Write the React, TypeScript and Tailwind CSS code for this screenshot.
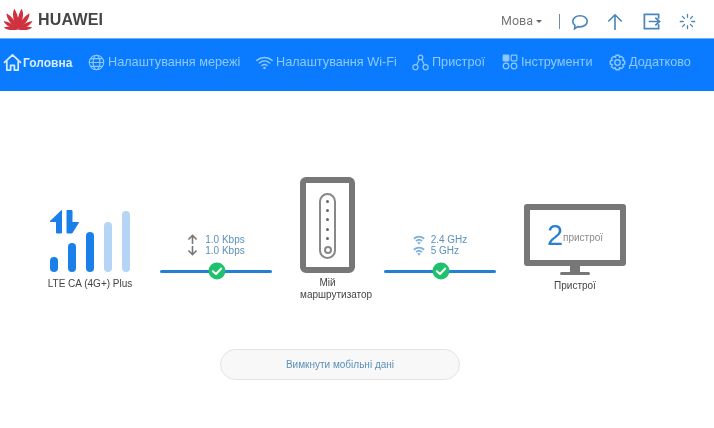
import { ReactNode } from "react"

const navItems: { label: string; icon: ReactNode; active?: boolean; cls: string }[] = [
  {
    label: "Головна",
    active: true,
    cls: "w-[85px] gap-[1px]",
    icon: (
      <svg viewBox="0 0 20 20" className="w-[19px] h-[19px]" fill="none" stroke="currentColor" strokeWidth="1.800" strokeLinejoin="round">
        <path d="M1 10.500 10 2l9 8.500M4 8.500V18h4v-5h4v5h4V8.500" />
      </svg>
    ),
  },
  {
    label: "Налаштування мережі",
    cls: "w-[168px] gap-[3px]",
    icon: (
      <svg viewBox="0 0 20 20" className="w-[17px] h-[17px]" fill="none" stroke="currentColor" strokeWidth="1.300">
        <circle cx="10" cy="10" r="8.500" />
        <ellipse cx="10" cy="10" rx="4" ry="8.500" />
        <path d="M1.500 10h17M2.800 5.500h14.400M2.800 14.500h14.400" />
      </svg>
    ),
  },
  {
    label: "Налаштування Wi-Fi",
    cls: "w-[156px] gap-[3px]",
    icon: (
      <svg viewBox="0 0 20 20" className="w-[17px] h-[17px]" fill="none" stroke="currentColor" strokeWidth="1.700" strokeLinecap="round">
        <path d="M1 7.500c5-4.500 13-4.500 18 0M4 10.500c3.500-3 8.500-3 12 0M7 13.500c1.800-1.500 4.200-1.500 6 0" />
        <circle cx="10" cy="16.500" r="1.500" fill="currentColor" stroke="none" />
      </svg>
    ),
  },
  {
    label: "Пристрої",
    cls: "w-[90px] gap-[3px]",
    icon: (
      <svg viewBox="0 0 20 20" className="w-[17px] h-[17px]" fill="none" stroke="currentColor" strokeWidth="1.400">
        <circle cx="10" cy="4" r="2.700" />
        <circle cx="4" cy="15.500" r="3" />
        <circle cx="16" cy="15.500" r="3" />
        <path d="M8.500 6.300 5.500 12.800M11.500 6.300l3 6.500" />
      </svg>
    ),
  },
  {
    label: "Інструменти",
    cls: "w-[107px] gap-[3px]",
    icon: (
      <svg viewBox="0 0 20 20" className="w-[16px] h-[16px]" fill="none" stroke="currentColor" strokeWidth="1.500">
        <rect x="1.500" y="1.500" width="7" height="7" rx="1" fill="currentColor" />
        <rect x="11.500" y="1.500" width="7" height="7" rx="1" />
        <circle cx="5" cy="15" r="3.500" />
        <circle cx="15" cy="15" r="3.500" />
      </svg>
    ),
  },
  {
    label: "Додатково",
    cls: "gap-[3px]",
    icon: (
      <svg viewBox="0 0 20 20" className="w-[17px] h-[17px]" fill="none" stroke="currentColor" strokeWidth="1.600" strokeLinejoin="round">
        <path d="M8.200 1.500h3.600l.6 2.500 2.300-1.200 2.500 2.500-1.200 2.300 2.500.6v3.600l-2.500.6 1.200 2.300-2.500 2.500-2.300-1.200-.6 2.500H8.200l-.6-2.500-2.300 1.200-2.500-2.500 1.200-2.300-2.500-.6V8.200l2.500-.6-1.200-2.300 2.500-2.500L7.600 4z" />
        <circle cx="10" cy="10" r="3.300" />
      </svg>
    ),
  },
]

function HuaweiLogo() {
  const petals = [
    { a: -13, s: 1 },
    { a: 13, s: 1 },
    { a: -38, s: 0.94 },
    { a: 38, s: 0.94 },
    { a: -62, s: 0.8 },
    { a: 62, s: 0.8 },
    { a: -84, s: 0.68 },
    { a: 84, s: 0.68 },
  ]
  return (
    <svg viewBox="0 0 32 23" className="w-[32px] h-[23px]">
      {petals.map((p) => (
        <path
          key={p.a}
          d="M16 22.500C13 17 12.500 8 15 1.500 18 5 19.500 12 16 22.500z"
          fill="#d0313f"
          transform={`rotate(${p.a} 16 22.500) translate(16 22.500) scale(${p.s}) translate(-16 -22.500) ${p.a < 0 ? "translate(32 0) scale(-1 1)" : ""}`}
        />
      ))}
    </svg>
  )
}

function Check() {
  return (
    <svg viewBox="0 0 18 18" className="w-[18px] h-[18px]">
      <circle cx="9" cy="9" r="8.500" fill="#1fc16b" />
      <path d="M4.800 9.200 8 12l5.200-5.500" fill="none" stroke="#fff" strokeWidth="2" strokeLinecap="round" strokeLinejoin="round" />
    </svg>
  )
}

function Link({ children }: { children: ReactNode }) {
  return (
    <div className="w-[112px] flex flex-col items-center">
      <div className="h-[24px] flex flex-col justify-center">{children}</div>
      <div className="relative w-full h-[3px] mt-[13px] bg-[#2580d4] rounded-full">
        <div className="absolute left-[48px] top-[-8px]">
          <Check />
        </div>
      </div>
    </div>
  )
}

function WifiGlyph() {
  return (
    <svg viewBox="0 0 14 11" className="w-[12px] h-[10px] text-[#7fb2d6]" fill="none" stroke="currentColor" strokeWidth="2.200">
      <path d="M1 4c3.500-3 8.500-3 12 0M3.500 6.800c2-1.700 5-1.700 7 0" />
      <path d="M5 8.500c1.200-.8 2.800-.8 4 0L7 11z" fill="currentColor" stroke="none" />
    </svg>
  )
}

function Arrow({ up }: { up?: boolean }) {
  return (
    <svg viewBox="0 0 12 12" className={up ? "w-[11px] h-[11px] text-[#777]" : "w-[11px] h-[11px] text-[#777] rotate-180"} fill="none" stroke="currentColor" strokeWidth="1.700">
      <path d="M6 11V1.500M1.500 6 6 1.500 10.500 6" />
    </svg>
  )
}

export default function App() {
  return (
    <div className="w-[714px] h-[428px] bg-white overflow-hidden blur-[0.4px] font-['Liberation_Sans',Arial,sans-serif]">
      <header className="h-[38px] flex items-center pl-[2px] pr-[18px]">
        <div className="flex items-center -mt-[1px]">
          <HuaweiLogo />
          <span className="ml-[4px] mt-[3px] text-[16px] font-bold tracking-[0.2px] text-[#444]">HUAWEI</span>
        </div>
        <div className="ml-auto mt-[5px] flex items-center text-[#4a86b8]">
          <span className="text-[12.5px] text-[#777] font-['Roboto',sans-serif]">Мова</span>
          <span className="ml-[3px] w-0 h-0 border-x-[3px] border-x-transparent border-t-[3px] border-t-[#666]" />
          <span className="ml-[17px] w-px h-[15px] bg-[#6d8ea8]" />
          <svg viewBox="0 0 20 20" className="ml-[11px] w-[18px] h-[18px]" fill="none" stroke="currentColor" strokeWidth="1.800">
            <path d="M10 3c4.500 0 8 2.700 8 6.200s-3.500 6.200-8 6.200c-.9 0-1.700-.1-2.500-.3L4 17.500l.4-3.700C2.900 12.700 2 11 2 9.200 2 5.700 5.500 3 10 3z" />
          </svg>
          <svg viewBox="0 0 20 20" className="ml-[17px] w-[18px] h-[18px]" fill="none" stroke="currentColor" strokeWidth="1.800">
            <path d="M10 19V2M2.500 9.500 10 2l7.500 7.500" />
          </svg>
          <svg viewBox="0 0 20 20" className="ml-[18px] w-[19px] h-[19px]" fill="none" stroke="currentColor" strokeWidth="1.800">
            <path d="M17.500 7V2.500h-15v15h15V13M7 10h11.500M14 5.800l4.500 4.200-4.500 4.200" />
          </svg>
          <svg viewBox="0 0 20 20" className="ml-[18px] w-[17px] h-[17px]" fill="none" stroke="currentColor" strokeWidth="1.500" strokeLinecap="round">
            <path d="M10 1.500v3.500M10 15v3.500M1.500 10H5M15 10h3.500M4 4l2.500 2.500M13.500 13.500 16 16M4 16l2.500-2.500M13.500 6.500 16 4" />
          </svg>
        </div>
      </header>

      <nav className="h-[53px] pb-[5px] bg-[#0a7bff] border-t border-t-[#6fb3f5] flex items-center pl-[3px] text-[12.7px]">
        {navItems.map((item) => (
          <div key={item.label} className={`${item.cls} flex items-center ${item.active ? "text-[#d8ecff] text-[12px] font-bold" : "text-[#8fc9fb]"}`}>
            {item.icon}
            <span className="whitespace-nowrap">{item.label}</span>
          </div>
        ))}
      </nav>

      <main className="flex items-start pl-[48px] text-[10px] text-[#444]">
        <div className="mt-[119px] w-[84px] flex flex-col items-center">
          <div className="relative w-[84px] h-[62px] flex items-end gap-[10px] pl-[2px]">
            <div className="w-[8px] h-[15px] rounded-full bg-[#1a7fe8]" />
            <div className="w-[8px] h-[29px] rounded-full bg-[#1a7fe8]" />
            <div className="w-[8px] h-[40px] rounded-full bg-[#1a7fe8]" />
            <div className="w-[8px] h-[50px] rounded-full bg-[#b4d5f5]" />
            <div className="w-[8px] h-[61px] rounded-full bg-[#b4d5f5]" />
            <svg viewBox="0 0 31 24" className="absolute left-[1px] top-0 w-[31px] h-[24px]" fill="#1a7fe8" stroke="#1a7fe8" strokeWidth="1" strokeLinejoin="round">
              <path d="M12.500 .500v22.500h-5V11.500H1z" />
              <path d="M18 .500h5v12h6.500L23 23h-5z" />
            </svg>
          </div>
          <span className="mt-[4px] whitespace-nowrap">LTE CA (4G+) Plus</span>
        </div>

        <div className="mt-[142px] ml-[28px]">
          <Link>
            <div className="grid grid-cols-[11px_auto] gap-x-[7px] leading-[11px] text-[#5a90bb]">
              <Arrow up />
              <span>1.0 Kbps</span>
              <Arrow />
              <span>1.0 Kbps</span>
            </div>
          </Link>
        </div>

        <div className="mt-[86px] ml-[28px] w-[55px] flex flex-col">
          <div className="w-[55px] h-[96px] border-[6px] border-[#777] rounded-[6px] flex items-center justify-center">
            <div className="w-[17px] h-[66px] mt-[2px] border-2 border-[#888] rounded-full flex flex-col items-center justify-between pt-[5px] pb-[3px]">
              {[0, 1, 2, 3, 4].map((n) => (
                <span key={n} className="w-[3px] h-[3px] rounded-full bg-[#666]" />
              ))}
              <span className="w-[8px] h-[8px] rounded-full border-2 border-[#888]" />
            </div>
          </div>
          <span className="mt-[4px] leading-[12px] text-center">Мій</span>
          <span className="leading-[12px] whitespace-nowrap">маршрутизатор</span>
        </div>

        <div className="mt-[142px] ml-[29px]">
          <Link>
            <div className="grid grid-cols-[12px_auto] gap-x-[6px] items-center leading-[11px] text-[#5a90bb]">
              <WifiGlyph />
              <span>2.4 GHz</span>
              <WifiGlyph />
              <span>5 GHz</span>
            </div>
          </Link>
        </div>

        <div className="mt-[113px] ml-[28px] w-[102px] flex flex-col items-center">
          <div className="w-[102px] h-[62px] border-[6px] border-[#777] rounded-[3px] flex items-center justify-center">
            <span className="text-[29px] leading-none text-[#2a7fd0]">2</span>
            <span className="text-[10px] text-[#8a8a8a] mt-[5px]">пристрої</span>
          </div>
          <div className="w-[10px] h-[6px] bg-[#777]" />
          <div className="w-[30px] h-[3px] bg-[#777] rounded-full" />
          <span className="mt-[3px]">Пристрої</span>
        </div>
      </main>

      <div className="flex justify-center pr-[34px] mt-[48px]">
        <button className="w-[240px] h-[31px] rounded-full bg-[#f8f8f8] border border-[#e3e3e3] text-[10px] text-[#5a90bb]">
          Вимкнути мобільні дані
        </button>
      </div>
    </div>
  )
}
